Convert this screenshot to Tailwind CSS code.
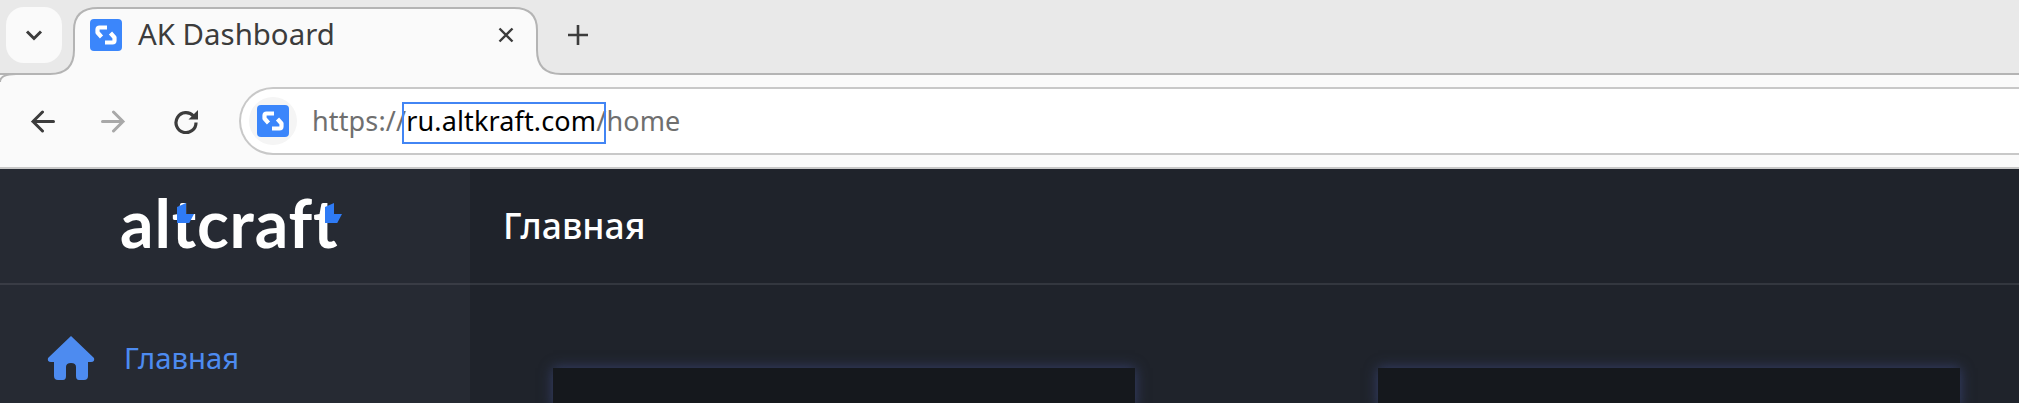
<!DOCTYPE html>
<html lang="ru">
<head>
  <meta charset="UTF-8" />
  <title>AK Dashboard</title>
  <script src="https://cdn.jsdelivr.net/npm/@tailwindcss/browser@4"></script>
</head>
<body class="bg-[#1f232b] h-[403px] w-[2019px] overflow-hidden font-['Noto_Sans',sans-serif]">
  <!-- Tab strip -->
  <div class="relative h-[75px] bg-[#e9e9e9] border-b-2 border-[#b4b4b4] flex items-start">
    <svg class="absolute left-0 top-0" width="620" height="84" viewBox="0 0 620 84" fill="none">
      <path d="M0 84V82Q0 74 16 74H50Q74 74 74 50V30Q74 8 98 8H514Q537 8 537 30V50Q537 74 561 74V84Z" fill="#fafafa"/>
      <path d="M0 82Q0 74 16 74H50Q74 74 74 50V30Q74 8 98 8H514Q537 8 537 30V50Q537 74 561 74" stroke="#b4b4b4" stroke-width="2"/>
    </svg>
    <div class="relative ml-[6px] mt-[7px] w-[56px] h-[56px] rounded-[18px] bg-[#fafafa] flex items-center justify-center">
      <svg width="18" height="12" viewBox="0 0 18 12" fill="none"><path d="M2 2.5 9 9.5 16 2.5" stroke="#3c3c3c" stroke-width="3"/></svg>
    </div>
    <div class="relative ml-[28px] mt-[19px] w-[32px] h-[32px] shrink-0">
      <svg width="32" height="32" viewBox="0 0 32 32" fill="none">
        <rect width="32" height="32" rx="4" fill="#3b86fb"/>
        <path d="M17 8.5H9.5Q7.5 8.5 7.5 10.5V13.5L11.5 18" stroke="#fff" stroke-width="4.2" stroke-linejoin="round"/>
        <path d="M15 23.5H22.5Q24.5 23.5 24.5 21.5V18.5L20.5 14" stroke="#fff" stroke-width="4.2" stroke-linejoin="round"/>
      </svg>
    </div>
    <span class="relative ml-[16px] mt-[12px] w-[360px] text-[29.4px] leading-[44px] text-[#3c3c3c]">AK Dashboard</span>
    <svg class="relative mt-[27px]" width="16" height="16" viewBox="0 0 16 16" fill="none"><path d="M1.5 1.5 14.5 14.5M14.5 1.5 1.5 14.5" stroke="#3c3c3c" stroke-width="2.4"/></svg>
    <svg class="relative ml-[54px] mt-[25px]" width="20" height="20" viewBox="0 0 20 20" fill="none"><path d="M10 0V20M0 10H20" stroke="#3c3c3c" stroke-width="2.6"/></svg>
  </div>

  <!-- Toolbar -->
  <div class="h-[94px] bg-[#fafafa] border-b-2 border-[#c8c8c8] flex items-start">
    <svg class="ml-[30px] mt-[35px]" width="25" height="23" viewBox="0 0 25 23" fill="none"><path d="M23.5 11.5H3M12.5 2 3 11.5 12.5 21" stroke="#3c3c3c" stroke-width="3" stroke-linecap="round"/></svg>
    <svg class="ml-[46px] mt-[35px]" width="25" height="23" viewBox="0 0 25 23" fill="none"><path d="M1.5 11.5H22M12.5 2 22 11.5 12.5 21" stroke="#a8a8a8" stroke-width="3" stroke-linecap="round"/></svg>
    <svg class="ml-[47px] mt-[34px]" width="26" height="25" viewBox="0 0 26 25" fill="none"><path d="M20.5 7A10 10 0 1 0 23 13.5" stroke="#3c3c3c" stroke-width="3.2"/><path d="M25 1V10.5H15.5Z" fill="#3c3c3c"/></svg>
    <!-- Address bar -->
    <div class="ml-[40px] mt-[12px] h-[68px] flex-1 bg-white border-2 border-r-0 border-[#c8c8c8] rounded-l-[34px] flex items-center">
      <div class="ml-[8px] w-[48px] h-[48px] rounded-full bg-[#f5f5f5] flex items-center justify-center">
        <svg width="32" height="32" viewBox="0 0 32 32" fill="none">
          <rect width="32" height="32" rx="4" fill="#3b86fb"/>
          <path d="M17 8.5H9.5Q7.5 8.5 7.5 10.5V13.5L11.5 18" stroke="#fff" stroke-width="4.2" stroke-linejoin="round"/>
          <path d="M15 23.5H22.5Q24.5 23.5 24.5 21.5V18.5L20.5 14" stroke="#fff" stroke-width="4.2" stroke-linejoin="round"/>
        </svg>
      </div>
      <div class="ml-[15px] flex items-center text-[27px] tracking-[0.14px] text-[#6f6f6f]">
        <span>https:/</span><span>/</span>
        <span class="relative text-black">ru.altkraft.com<span class="text-[#6f6f6f]">/</span><span class="absolute -left-[4px] right-0 top-[1px] h-[42px] border-2 border-[#4285f4]"></span></span>
        <span>home</span>
      </div>
    </div>
  </div>

  <!-- App -->
  <div class="flex h-[234px]">
    <aside class="w-[470px] shrink-0 bg-[#262a33]">
      <div class="relative h-[116px] border-b-2 border-[#393c45] pl-[120px] pt-[19px]">
        <span class="relative block h-[70px] text-[66px] leading-[70px] font-bold tracking-[0.9px] text-white font-['Lato',sans-serif]">altcraft</span>
        <span class="absolute left-[177px] top-[34px] w-[17px] h-[20px] bg-[#2f7bf5] [clip-path:polygon(0_20%,53%_0,53%_55%,100%_55%,72%_100%,0_100%)]"></span>
        <span class="absolute left-[325px] top-[34px] w-[17px] h-[20px] bg-[#2f7bf5] [clip-path:polygon(0_20%,53%_0,53%_55%,100%_55%,72%_100%,0_100%)]"></span>
      </div>
      <div class="ml-[47px] mt-[51px] flex items-center">
        <svg width="48" height="44" viewBox="0 0 48 44" fill="#4d8bf0"><path d="M24 0 47 22Q48 26 44 26H41V40Q41 44 37 44H32Q29 44 29 40V31Q29 27 24 27T19 31V40Q19 44 16 44H11Q7 44 7 40V26H4Q0 26 1 22Z"/></svg>
        <span class="ml-[29px] text-[29.3px] leading-[34px] text-[#4d8bf0]">Главная</span>
      </div>
    </aside>
    <main class="flex-1 bg-[#1f232b]">
      <div class="h-[116px] border-b-2 border-[#33373f] pl-[33px] flex items-center">
        <h1 class="text-[35.5px] font-medium text-white">Главная</h1>
      </div>
      <div class="flex pl-[83px] pt-[83px] gap-[243px]">
        <div class="w-[582px] h-[40px] bg-[#15181d] shadow-[0_0_12px_#36406c]"></div>
        <div class="w-[582px] h-[40px] bg-[#15181d] shadow-[0_0_12px_#36406c]"></div>
      </div>
    </main>
  </div>
</body>
</html>
